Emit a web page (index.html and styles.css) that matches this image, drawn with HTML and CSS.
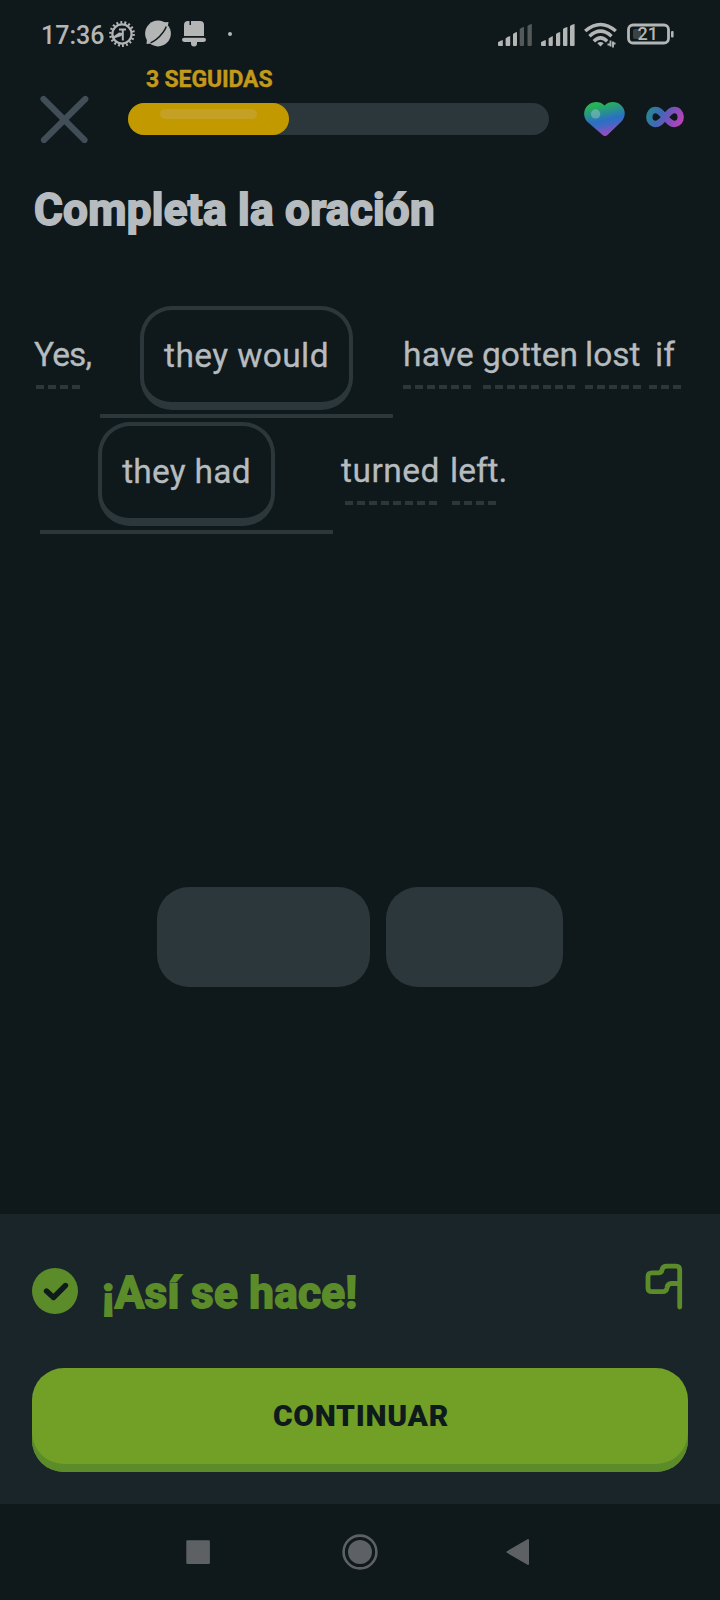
FILE: index.html
```html
<!DOCTYPE html>
<html lang="es">
<head>
<meta charset="utf-8">
<meta name="viewport" content="width=device-width, initial-scale=1">
<title>Completa la oración</title>
<link rel="stylesheet" href="styles.css">
</head>
<body>
<div class="screen">
  <div class="status">
    <span class="clock">17:36</span>
    <svg class="status-left" width="132" height="30" viewBox="106 19 132 30">
      <g fill="none" stroke="#b4b6b5">
        <circle cx="122" cy="34" r="9.600" stroke-width="2.200"/>
        <circle cx="122" cy="34" r="11.600" stroke-width="2.600" stroke-dasharray="1.900 2.150"/>
        <path d="M119 29.500h7M122.800 29v11.500" stroke-width="2"/>
      </g>
      <path d="M112 37.500l7-5 3.500 .5-1 3-8 2.500z" fill="#b4b6b5"/>
      <circle cx="158" cy="33.500" r="12.900" fill="#b4b6b5"/>
      <path d="M144 45.500C156 42 165 33 169 20" fill="none" stroke="#0f171a" stroke-width="1.400"/>
      <path d="M163 22.500l5.500-.5-1 6M147 39l-.5 5 5-.5" fill="#b4b6b5"/>
      <path d="M184 36V25q0-4 4-4h1.500v4h1.500v-4h9q4 0 4 4v11z" fill="#b4b6b5"/>
      <rect x="182" y="37.700" width="24" height="4.300" rx="2.150" fill="#b4b6b5"/>
      <path d="M191 42h6v1.500a3 3 0 0 1-6 0z" fill="#b4b6b5"/>
      <circle cx="230" cy="34" r="2" fill="#b4b6b5"/>
    </svg>
    <svg class="status-right" width="178" height="30" viewBox="496 19 178 30">
      <g fill="#b4b6b5">
        <path d="M498 45v-2.500q0-1 4.800-2.500v6h-3.800q-1 0-1-1zM505.600 45v-6.500q1.500-1.500 4.600-2.500v9q0 1-1 1h-2.600q-1 0-1-1zM513 45V34q1.500-1.500 4-2v13q0 1-1 1h-2q-1 0-1-1z"/>
        <path d="M541 45v-2.500q0-1 4.800-2.500v6H542q-1 0-1-1zM548.600 45v-6.500q1.500-1.500 4.200-2.500v9q0 1-1 1h-2.200q-1 0-1-1zM556 45V34q1.500-1.500 4.200-2v13q0 1-1 1H557q-1 0-1-1zM563 45V29q1.500-1.500 4.400-2v18q0 1-1 1H564q-1 0-1-1zM570 45V26q1.500-1.500 4.600-2v21q0 1-1 1H571q-1 0-1-1z"/>
      </g>
      <path d="M519.700 45V29q1.500-1.500 4.300-2v18q0 1-1 1h-2.300q-1 0-1-1zM527.500 45V26q1.500-1.500 4.300-2v21q0 1-1 1h-2.300q-1 0-1-1z" fill="#545959"/>
      <g fill="none" stroke="#b4b6b5" stroke-width="3.500">
        <path d="M585.200 31q15.300-13 30.600 0M589.500 36.200q11-10 22 0M593.800 41.200q6.700-6.500 13.400 0"/>
      </g>
      <path d="M597.300 43.300q3.200-2.600 6.400 0L600.500 46.500z" fill="#b4b6b5"/>
      <path d="M610.500 40.500v6M607.500 44.500h3M613 41.500v6M613 43.500h2.500" stroke="#b4b6b5" stroke-width="1.900" fill="none"/>
      <rect x="628.500" y="25" width="40" height="18" rx="4.500" fill="none" stroke="#b4b6b5" stroke-width="2.800"/>
      <rect x="633" y="29" width="8" height="10" rx="2" fill="#3d4343"/>
      <rect x="671" y="31" width="2.600" height="6.500" rx="1" fill="#b4b6b5"/>
      <text class="battery" x="637.500" y="40.300">21</text>
    </svg>
  </div>

  <header class="header">
    <svg class="close" width="50" height="48" viewBox="0 0 50 48"><path d="M4.500 4L45.500 45M46.300 4L5 45" stroke="#414e57" stroke-width="6.200" stroke-linecap="round"/></svg>
    <div class="progress">
      <div class="streak">3 SEGUIDAS</div>
      <div class="track"><div class="fill"><div class="shine"></div></div></div>
    </div>
    <svg class="heart" width="42" height="35" viewBox="584 102 42 35">
      <defs><linearGradient id="hg" x1=".3" y1="0" x2=".58" y2="1"><stop offset=".08" stop-color="#27b356"/><stop offset=".55" stop-color="#2a6fc4"/><stop offset=".68" stop-color="#3f69c5"/><stop offset=".95" stop-color="#9b4bbd"/></linearGradient></defs>
      <path d="M604.500 105.500C600 101 593 101 588 105.200C583 109.500 583 117 587 121.500L602 134.500Q605 137.500 608 134.500L621 122C626 117 626 109.500 621 105.200C616.500 101 609 101 604.500 105.500Z" fill="url(#hg)"/>
      <circle cx="595.600" cy="114" r="4.700" fill="#fff" fill-opacity=".25"/>
    </svg>
    <svg class="infinity" width="38" height="22" viewBox="645.500 106 38 22">
      <defs><linearGradient id="ig" gradientUnits="userSpaceOnUse" x1="648" y1="108" x2="682" y2="124"><stop offset="0" stop-color="#258b8d"/><stop offset=".35" stop-color="#3f68b8"/><stop offset=".65" stop-color="#7e50bb"/><stop offset="1" stop-color="#c23fb9"/></linearGradient></defs>
      <path d="M664.500 117C660.500 112.500 658.500 110 655 110A6.200 7 0 0 0 655 124C658.500 124 660.500 121.500 664.500 117C668.500 112.500 670.500 110 674 110A6.200 7 0 0 1 674 124C670.500 124 668.500 121.500 664.500 117Z" fill="none" stroke="url(#ig)" stroke-width="6.400"/>
    </svg>
  </header>

  <main class="exercise">
    <h1 class="title">Completa la oración</h1>
    <div class="line">
      <span class="word yes">Yes,</span>
      <span class="slot slot-a"><span class="chip chip-a"><span>they would</span></span></span>
      <span class="word have">have</span>
      <span class="word gotten">gotten</span>
      <span class="word lost">lost</span>
      <span class="word if">if</span>
    </div>
    <div class="line">
      <span class="slot slot-b"><span class="chip chip-b"><span>they had</span></span></span>
      <span class="word turned">turned</span>
      <span class="word left">left.</span>
    </div>
    <div class="bank"><div class="blank blank-a"></div><div class="blank blank-b"></div></div>
  </main>

  <section class="feedback">
    <div class="result">
      <svg width="46" height="46" viewBox="0 0 46 46"><circle cx="23" cy="23" r="23" fill="#5b8c29"/><path d="M14.500 23l7 6.500L33.500 17.500" fill="none" stroke="#0f1a1c" stroke-width="5.400" stroke-linecap="round" stroke-linejoin="round"/></svg>
      <h2 class="praise">¡Así se hace!</h2>
      <svg class="flag" width="38" height="47" viewBox="645 1262.500 38 47"><path d="M679.700 1306.500V1269.500Q679.700 1265.700 676 1265.700H667Q662.500 1265.700 662 1269.500Q661.500 1272.300 658.500 1272.300H652Q648 1272.300 648 1276V1287.500Q648 1291.200 652 1291.200H662.500Q666.500 1291.200 667 1287.500Q667.500 1283 671.500 1283H679" fill="none" stroke="#5b8c29" stroke-width="4.800" stroke-linecap="round" stroke-linejoin="round"/></svg>
    </div>
    <button class="continue"><span>CONTINUAR</span></button>
  </section>

  <nav class="nav">
    <svg width="24" height="24" viewBox="0 0 24 24"><rect x=".3" y=".3" width="23.600" height="23.600" rx="1.200" fill="#5d6163"/></svg>
    <svg class="home" width="36" height="36" viewBox="0 0 36 36"><circle cx="18" cy="18" r="16.400" fill="none" stroke="#5d6163" stroke-width="2.600"/><circle cx="18" cy="18" r="12" fill="#5d6163"/></svg>
    <svg width="24" height="28" viewBox="0 0 24 28"><path d="M1.500 14L22 2V26z" fill="#5d6163" stroke="#5d6163" stroke-width="2" stroke-linejoin="round"/></svg>
  </nav>
</div>
</body>
</html>
```
FILE: styles.css
```css
* { box-sizing: border-box; }
body { margin: 0; background: #0f181b; font-family: Roboto, "Liberation Sans", sans-serif; }
.screen { width: 720px; height: 1600px; display: flex; flex-direction: column; overflow: hidden; background: #0f181b; }

.status { height: 67px; padding: 19px 46px 0 41px; display: flex; align-items: flex-start; color: #b4b6b5; }
.clock { width: 65px; font-size: 25px; line-height: 33px; font-weight: 500; white-space: nowrap; }
.status-right { margin-left: auto; }
.battery { font: 500 18px Roboto, sans-serif; fill: #b4b6b5; }

.header { height: 111px; display: flex; align-items: flex-start; padding-left: 39px; }
.close { margin: 28px -2px 0 0; flex: none; }
.progress { width: 421px; margin-left: 41px; }
.streak { height: 36px; padding: 1px 0 0 18px; font-size: 23px; line-height: 24px; font-weight: 700; letter-spacing: -.15px; color: #c2991a; -webkit-text-stroke: .4px #c2991a; white-space: nowrap; }
.track { height: 32px; border-radius: 16px; background: #2c373c; }
.fill { width: 161px; height: 32px; padding: 6px 32px; border-radius: 16px; background: #c29a00; }
.shine { height: 10px; border-radius: 5px; background: #c4a024; }
.heart { margin: 35px 0 0 35px; }
.infinity { margin: 39px 0 0 20px; }

.exercise { height: 1036px; }
.title { margin: 0 0 69px 34px; padding-top: 5px; font-size: 44px; line-height: 54px; font-weight: 700; letter-spacing: .3px; color: #b6bbbf; -webkit-text-stroke: 1.8px #b6bbbf; white-space: nowrap; }
.line { height: 116px; display: flex; align-items: flex-start; color: #b6bbbf; font-size: 33.500px; -webkit-text-stroke: .3px #b6bbbf; white-space: nowrap; }
.word { --dash: 100%; --start: 0px; height: 83px; padding-top: 29px; line-height: 40px; flex: none;
  background: repeating-linear-gradient(90deg, #2c373c 0 8px, transparent 8px 12px) var(--start) 79px / var(--dash) 4px no-repeat; }
.yes { width: 66px; margin-left: 34px; --start: 2px; --dash: 44px; letter-spacing: -.9px; }
.have { width: 79px; margin-left: 10px; --dash: 68px; letter-spacing: .2px; }
.gotten { width: 103px; --start: 1px; --dash: 92px; }
.lost { width: 64px; --dash: 56px; }
.if { width: 32px; padding-left: 6px; --dash: 32px; }
.turned { width: 107px; margin-left: 8px; --start: 4px; --dash: 92px; letter-spacing: .5px; }
.left { width: 60px; padding-left: 2px; --start: 4px; --dash: 44px; }
.slot { width: 293px; height: 112px; flex: none; display: flex; justify-content: center; align-items: flex-start; border-bottom: 4px solid #2c373c; }
.slot-b { margin-left: 40px; }
.chip { height: 104px; border: 4px solid #2c373c; border-bottom-width: 8px; border-radius: 32px; padding-top: 26px; line-height: 40px; text-align: center; }
.chip-a { width: 213px; letter-spacing: .4px; }
.chip-b { width: 177px; letter-spacing: .25px; }
.bank { display: flex; justify-content: center; gap: 16px; margin-top: 349px; }
.blank { height: 100px; border-radius: 32px; background: #2c373c; }
.blank-a { width: 213px; }
.blank-b { width: 177px; }

.feedback { height: 290px; padding: 48px 32px 32px; background: #1a252a; }
.result { height: 106px; display: flex; align-items: flex-start; }
.result > svg:first-child { margin-top: 6px; }
.praise { margin: 6px 0 0 24px; font-size: 44px; line-height: 50px; font-weight: 700; letter-spacing: .3px; color: #5b8c29; -webkit-text-stroke: 1.8px #5b8c29; white-space: nowrap; }
.result .flag { margin: 1px 5px 0 auto; }
.continue { display: block; width: 656px; height: 104px; padding: 0 0 9px 2px; border: 0; border-radius: 32px; background: #72a026; box-shadow: inset 0 -8px #5b8c29; font: 900 30px/36px Roboto, sans-serif; letter-spacing: .7px; color: #0f1a1c; }

.nav { height: 96px; display: flex; justify-content: space-between; align-items: center; padding: 0 190px 0 186px; }
.home { margin-left: 4px; }
```
